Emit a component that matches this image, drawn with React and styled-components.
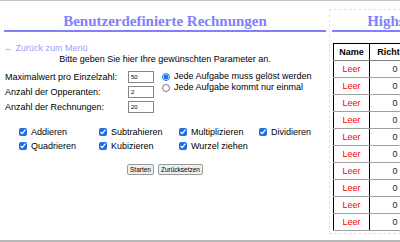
import styled, { createGlobalStyle } from 'styled-components'

const Global = createGlobalStyle`
    html, body {
        margin: 0;
        padding: 0;
        background: #fff;
        overflow: hidden;
    }
    body {
        font-family: "Liberation Sans", Arial, sans-serif;
        font-size: 9px;
        color: #000;
    }
`

const Page = styled.div`
    width: 400px;
    height: 239px;
    border-top: 1px solid #c4c4c4;
    border-bottom: 2px solid #b8b8b8;
    display: flex;
    align-items: flex-start;
    overflow: hidden;
`
const Main = styled.div`
    width: 322px;
    flex-shrink: 0;
    margin-left: 4px;
    padding-top: 11px;
`
const Title = styled.h1`
    margin: 0;
    font-family: "Liberation Serif", "Times New Roman", serif;
    font-size: 15px;
    line-height: 18px;
    font-weight: bold;
    color: #8080ff;
    text-align: center;
    white-space: nowrap;
    border-bottom: 2px solid #8080ff;
`
const BackLink = styled.a`
    display: block;
    margin-top: 11px;
    line-height: 10px;
    color: #9c9cff;
    text-decoration: none;
`
const Intro = styled.p`
    margin: 1px 0 0;
    line-height: 10px;
    text-align: center;
`
const Form = styled.div`
    display: flex;
    align-items: flex-start;
    margin-top: 5px;
    padding-left: 1px;
`
const Fields = styled.div`
    display: grid;
    grid-template-columns: 123px 26px;
    grid-auto-rows: 15px;
    align-items: center;
`
const Label = styled.label`
    line-height: 10px;
`
const NumInput = styled.input`
    box-sizing: border-box;
    width: 26px;
    height: 12px;
    margin: 0;
    padding: 0 2px;
    border: 1px solid #858585;
    font-family: "Liberation Sans", Arial, sans-serif;
    font-size: 6px;
`
const Radios = styled.div`
    display: flex;
    flex-direction: column;
    margin: 2px 0 0 8px;
`
const Choice = styled.label`
    display: flex;
    align-items: center;
    gap: 4px;
    line-height: 11px;
    height: ${p => p.$h || 11}px;
    white-space: nowrap;

    input {
        margin: 0;
        width: 8px;
        height: 8px;
        accent-color: #1a6fe8;
    }
`
const Ops = styled.div`
    display: grid;
    grid-template-columns: repeat(4, 80px);
    grid-auto-rows: 14px;
    align-items: center;
    margin-top: 11px;
    padding-left: 15px;
`
const Buttons = styled.div`
    display: flex;
    justify-content: center;
    gap: 4px;
    margin-top: 11px;
`
const Button = styled.button`
    height: 11px;
    margin: 0;
    padding: 0 2px;
    border: 1px solid #9a9a9a;
    border-radius: 2px;
    background: #efefef;
    font-family: "Liberation Sans", Arial, sans-serif;
    font-size: 6.5px;
    line-height: 9px;
    color: #000;
`
const Side = styled.div`
    width: 135px;
    flex-shrink: 0;
    margin: 8px 0 0 3px;
    padding: 2px;
    border: 1px dashed #e2e2e2;
`
const SideTitle = styled(Title)``

const Scores = styled.table`
    margin: 11px 0 0 1px;
    border-collapse: collapse;
    border-top: 1px solid #000;
    border-left: 1px solid #000;
    font-size: 9px;

    th, td {
        height: 16px;
        padding: 0;
        border-bottom: 1px solid #a0a0a0;
        border-right: 1px solid #000;
        white-space: nowrap;
    }
    th {
        font-weight: bold;
        border-bottom-color: #808080;
    }
`
const NameCell = styled.td`
    width: 35px;
    text-align: center;
    color: #f00;
`
const CountCell = styled.td`
    width: 50px;
    text-align: center;
    color: #222;
`

const ops = ['Addieren', 'Subtrahieren', 'Multiplizieren', 'Dividieren', 'Quadrieren', 'Kubizieren', 'Wurzel ziehen']

const App = () => {
    const rows = Array.from({ length: 10 })

    return (
        <>
            <Global />
            <Page>
                <Main>
                    <Title>Benutzerdefinierte Rechnungen</Title>
                    <BackLink href="#">← Zurück zum Menü</BackLink>
                    <Intro>Bitte geben Sie hier Ihre gewünschten Parameter an.</Intro>
                    <Form>
                        <Fields>
                            <Label>Maximalwert pro Einzelzahl:</Label>
                            <NumInput defaultValue="50" />
                            <Label>Anzahl der Opperanten:</Label>
                            <NumInput defaultValue="2" />
                            <Label>Anzahl der Rechnungen:</Label>
                            <NumInput defaultValue="20" />
                        </Fields>
                        <Radios>
                            <Choice><input type="radio" name="mode" defaultChecked />Jede Aufgabe muss gelöst werden</Choice>
                            <Choice><input type="radio" name="mode" />Jede Aufgabe kommt nur einmal</Choice>
                        </Radios>
                    </Form>
                    <Ops>
                        {ops.map(op => (
                            <Choice key={op} $h={14}><input type="checkbox" defaultChecked />{op}</Choice>
                        ))}
                    </Ops>
                    <Buttons>
                        <Button>Starten</Button>
                        <Button>Zurücksetzen</Button>
                    </Buttons>
                </Main>
                <Side>
                    <SideTitle>Highscore</SideTitle>
                    <Scores>
                        <thead>
                            <tr><th>Name</th><th>Richtige</th></tr>
                        </thead>
                        <tbody>
                            {rows.map((_, i) => (
                                <tr key={i}><NameCell>Leer</NameCell><CountCell>0</CountCell></tr>
                            ))}
                        </tbody>
                    </Scores>
                </Side>
            </Page>
        </>
    )
}

export default App
